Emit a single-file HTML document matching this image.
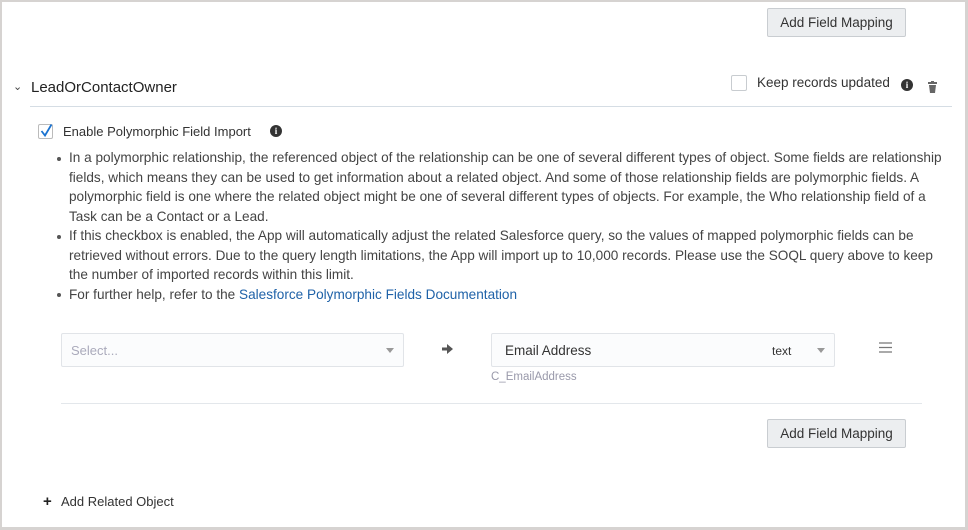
<!DOCTYPE html>
<html><head><style>
*{margin:0;padding:0;box-sizing:border-box}
body{width:968px;height:530px;background:#fff;font-family:"Liberation Sans",Arial,sans-serif;color:#333;position:relative;overflow:hidden}
.frame{position:absolute;left:0;top:0;width:968px;height:530px;border:2px solid #d6d3d1;border-right-width:3px;border-bottom-width:3px}
.a{position:absolute;white-space:nowrap}
.btn{position:absolute;width:139px;height:29px;background:#eceef0;border:1px solid #c9cdd1;border-radius:2px;font-size:13.5px;color:#333;text-align:center;line-height:27px}
.info{position:absolute;width:12px;height:12px;border-radius:50%;background:#333;color:#fff;font-size:9px;font-weight:bold;text-align:center;line-height:12px;font-family:"Liberation Serif",serif}
.txt{font-size:13.6px;color:#444;line-height:19.5px}
.dot{position:absolute;width:4px;height:4px;border-radius:50%;background:#555}
.sel{position:absolute;height:34px;border:1px solid #e1e4e8;border-radius:2px;background:#fbfcfd}
.tri{position:absolute;width:0;height:0;border-left:4px solid transparent;border-right:4px solid transparent;border-top:5px solid #999}
</style></head><body>
<div class="frame"></div>
<div class="btn" style="left:767px;top:8px">Add Field Mapping</div>

<div class="a" style="left:13px;top:80px;font-size:11px;color:#444">&#8964;</div>
<div class="a" style="left:31px;top:79px;font-size:15px;color:#222">LeadOrContactOwner</div>
<div class="a" style="left:731px;top:75px;width:16px;height:16px;border:1px solid #c8ccd0;border-radius:2px"></div>
<div class="a" style="left:757px;top:75px;font-size:13.5px;color:#333">Keep records updated</div>
<div class="info" style="left:901px;top:79px">i</div>
<svg class="a" style="left:928px;top:81px" width="9" height="12" viewBox="0 0 9 12"><rect x="0" y="1" width="9" height="2" fill="#666"/><rect x="3" y="0" width="3" height="2" fill="#666"/><path d="M1 4h7l-1 8H2z" fill="#666"/></svg>
<div class="a" style="left:30px;top:106px;width:922px;height:1px;background:#d5dde4"></div>

<div class="a" style="left:38px;top:124px;width:15px;height:15px;border:1px solid #bbb;border-radius:2px"></div>
<svg class="a" style="left:39px;top:123px" width="14" height="15" viewBox="0 0 14 15"><path d="M2.5 8l3.5 4.5L12.5 1.5" stroke="#1a73d1" stroke-width="1.8" fill="none"/></svg>
<div class="a" style="left:63px;top:124px;font-size:13px;color:#333">Enable Polymorphic Field Import</div>
<div class="info" style="left:270px;top:125px">i</div>

<div class="dot" style="left:57px;top:157px"></div>
<div class="dot" style="left:57px;top:235px"></div>
<div class="dot" style="left:57px;top:293px"></div>
<div class="a txt" style="left:69px;top:148px">In a polymorphic relationship, the referenced object of the relationship can be one of several different types of object. Some fields are relationship<br>fields, which means they can be used to get information about a related object. And some of those relationship fields are polymorphic fields. A<br>polymorphic field is one where the related object might be one of several different types of objects. For example, the Who relationship field of a<br>Task can be a Contact or a Lead.<br>If this checkbox is enabled, the App will automatically adjust the related Salesforce query, so the values of mapped polymorphic fields can be<br>retrieved without errors. Due to the query length limitations, the App will import up to 10,000 records. Please use the SOQL query above to keep<br>the number of imported records within this limit.<br>For further help, refer to the <span style="color:#1f62a8">Salesforce Polymorphic Fields Documentation</span></div>

<div class="sel" style="left:61px;top:333px;width:343px"></div>
<div class="a" style="left:71px;top:343px;font-size:13px;color:#aab">Select...</div>
<div class="tri" style="left:386px;top:348px"></div>
<svg class="a" style="left:442px;top:344px" width="11" height="10" viewBox="0 0 11 10"><path d="M0 3.5h5V0l6 5-6 5V6.5H0z" fill="#555"/></svg>
<div class="sel" style="left:491px;top:333px;width:344px"></div>
<div class="a" style="left:505px;top:343px;font-size:13.5px;color:#333">Email Address</div>
<div class="a" style="left:772px;top:344px;font-size:12px;color:#333">text</div>
<div class="tri" style="left:817px;top:348px"></div>
<div class="a" style="left:491px;top:371px;font-size:11.5px;color:#99a">C_EmailAddress</div>
<svg class="a" style="left:879px;top:342px" width="13" height="11"><path d="M0 1h13M0 5.5h13M0 10h13" stroke="#777" stroke-width="1.2"/></svg>
<div class="a" style="left:61px;top:403px;width:861px;height:1px;background:#e3e7eb"></div>
<div class="btn" style="left:767px;top:419px">Add Field Mapping</div>

<div class="a" style="left:43px;top:493px;font-size:15px;font-weight:bold;color:#222">+</div>
<div class="a" style="left:61px;top:494px;font-size:13px;color:#333">Add Related Object</div>
</body></html>
